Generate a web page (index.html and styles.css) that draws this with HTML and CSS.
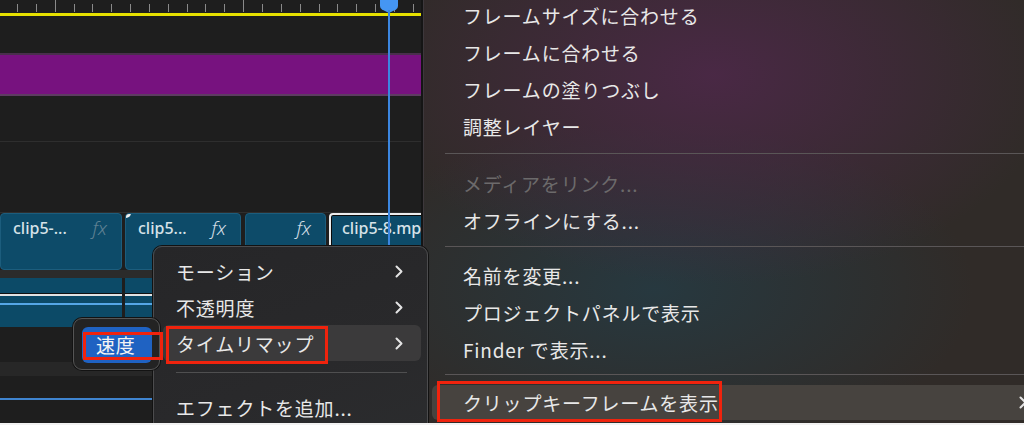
FILE: index.html
```html
<!DOCTYPE html>
<html lang="ja">
<head>
<meta charset="utf-8">
<title>Timeline context menu</title>
<link rel="stylesheet" href="styles.css">
</head>
<body>
<div class="app">
  <section class="timeline">
    <div class="ruler">
      <i class="tick"></i><i class="tick"></i><i class="tick major"></i><i class="tick"></i><i class="tick"></i><i class="tick"></i><i class="tick"></i><i class="tick"></i><i class="tick"></i><i class="tick"></i><i class="tick"></i><i class="tick"></i><i class="tick major"></i><i class="tick"></i><i class="tick"></i><i class="tick"></i><i class="tick"></i><i class="tick"></i><i class="tick"></i><i class="tick"></i><i class="tick"></i><i class="tick"></i>
    </div>
    <div class="work-area"></div>
    <div class="space s37"></div>
    <div class="purple-track"></div>
    <div class="space s45"></div>
    <div class="rule"></div>
    <div class="space s70"></div>
    <div class="rule"></div>
    <div class="clips">
      <div class="clip c1"><span class="name">clip5-...</span><span class="fx dim">fx</span></div>
      <div class="clip c2"><span class="name">clip5...</span><span class="fx">fx</span></div>
      <div class="clip c3"><span class="name"></span><span class="fx">fx</span></div>
      <div class="clip c4 selected"><span class="name">clip5-8.mp4</span></div>
    </div>
    <div class="band"></div>
    <div class="audio">
      <div class="aseg a1"></div>
      <div class="aseg a2"></div>
    </div>
    <div class="space s35"></div>
    <div class="band2"></div>
    <div class="space s22"></div>
    <div class="blue-rule"></div>
    <div class="playhead">
      <svg class="ph-head" width="18" height="13" viewBox="0 0 18 13"><path d="M0 0H18V6Q18 8 16 9.5L9 13L2 9.5Q0 8 0 6Z" fill="#4596f3"/></svg>
      <div class="ph-line"></div>
    </div>
  </section>
  <div class="divider"></div>
  <nav class="ctx-main">
    <ul class="ctx-list">
      <li class="mi">フレームサイズに合わせる</li>
      <li class="mi">フレームに合わせる</li>
      <li class="mi">フレームの塗りつぶし</li>
      <li class="mi">調整レイヤー</li>
      <li class="sep sep1"></li>
      <li class="mi disabled">メディアをリンク...</li>
      <li class="mi">オフラインにする...</li>
      <li class="sep sep2"></li>
      <li class="mi">名前を変更...</li>
      <li class="mi">プロジェクトパネルで表示</li>
      <li class="mi">Finder で表示...</li>
      <li class="sep sep3"></li>
      <li class="mi hot"><span>クリップキーフレームを表示</span><svg class="chev" width="8" height="13" viewBox="0 0 8 13"><polyline points="1.5,1.5 6.5,6.5 1.5,11.5"/></svg></li>
    </ul>
  </nav>

  <div class="submenu">
    <ul class="sub-list">
      <li class="si"><span>モーション</span><svg class="chev" width="8" height="13" viewBox="0 0 8 13"><polyline points="1.5,1.5 6.5,6.5 1.5,11.5"/></svg></li>
      <li class="si"><span>不透明度</span><svg class="chev" width="8" height="13" viewBox="0 0 8 13"><polyline points="1.5,1.5 6.5,6.5 1.5,11.5"/></svg></li>
      <li class="si hot"><span>タイムリマップ</span><svg class="chev" width="8" height="13" viewBox="0 0 8 13"><polyline points="1.5,1.5 6.5,6.5 1.5,11.5"/></svg></li>
      <li class="ssep"></li>
      <li class="si"><span>エフェクトを追加...</span></li>
    </ul>
  </div>

  <div class="popover">
    <div class="pop-item">速度</div>
  </div>

  <div class="mark m1"></div>
  <div class="mark m2"></div>
  <div class="mark m3"></div>
</div>
</body>
</html>
```

FILE: styles.css
```css
* { box-sizing: border-box; margin: 0; padding: 0; }
html, body { background: #f2f2f2; }
body {
  width: 1024px;
  height: 425px;
  overflow: hidden;
  font-family: "Noto Sans CJK JP", "Noto Sans", sans-serif;
}
ul { list-style: none; }

.app {
  position: relative;
  width: 1024px;
  height: 423px;
  overflow: hidden;
  display: grid;
  grid-template-columns: 421px 2px 1fr;
  background: #1d1d1d;
}

/* ---------- timeline ---------- */
.timeline {
  position: relative;
  display: flex;
  flex-direction: column;
  background: #1e1e1e;
  overflow: hidden;
}
.ruler {
  height: 13px;
  flex: none;
  display: flex;
  justify-content: space-between;
  align-items: flex-end;
  padding: 0 7px 1px 17px;
}
.tick { display: block; width: 1px; height: 8px; background: #8a8a8a; }
.tick.major { height: 12px; }
.work-area { height: 3px; flex: none; background: #e6e000; }
.space { flex: none; }
.s37 { height: 37px; }
.s45 { height: 45px; }
.s70 { height: 70px; }
.s35 { height: 35px; }
.s22 { height: 22px; }
.purple-track {
  height: 43px;
  flex: none;
  background: #77127f;
  border-top: 2px solid #4a2f4d;
  border-bottom: 2px solid #5e3b62;
}
.rule { height: 1px; flex: none; background: #2e2e2e; }

.clips { height: 57px; flex: none; display: flex; }
.clip {
  position: relative;
  flex: none;
  display: flex;
  justify-content: space-between;
  align-items: flex-start;
  padding: 3px 14px 0 12px;
  background: #0d4b69;
  border: 1px solid #1c5d7d;
  border-radius: 4px;
  font-family: "Noto Sans", "Open Sans", sans-serif;
  font-size: 16px;
  font-weight: 500;
  line-height: 22px;
  color: #d6e2e8;
  white-space: nowrap;
  overflow: hidden;
}
.c1 { width: 122px; }
.c2 { width: 116px; margin-left: 3px; }
.c3 { width: 81px; margin-left: 4px; }
.c4 { width: 110px; margin-left: 3px; }
.clip.selected {
  border: 2px solid #ececec;
  box-shadow: inset 0 0 0 1px #0a0a0a;
  padding-left: 11px;
  padding-top: 2px;
}
.c2::before {
  content: "";
  position: absolute;
  left: -1px;
  top: -1px;
  width: 6px;
  height: 5px;
  background: #f0f0f0;
  border-bottom-right-radius: 5px;
}
.fx {
  font-style: italic;
  font-size: 19px;
  font-weight: 300;
  color: #d2dde4;
}
.fx.dim { color: #5f8193; }

.band { height: 8px; flex: none; background: #2b2b2b; }
.audio { height: 49px; flex: none; display: flex; }
.aseg {
  background:
    linear-gradient(to bottom,
      transparent 15px, #111 15px, #111 16px,
      #e2e2e2 16px, #e2e2e2 18px, transparent 18px,
      transparent 25px, #55a6e6 25px, #55a6e6 27px, transparent 27px),
    #0c4a67;
}
.a1 { width: 122px; flex: none; }
.a2 { flex: 1; margin-left: 3px; }
.band2 { height: 14px; flex: none; background: #272727; }
.blue-rule { height: 2px; flex: none; background: #3f84cf; }

.playhead {
  position: absolute;
  left: 380px;
  top: 0;
  width: 18px;
  height: 100%;
}
.ph-head { position: absolute; left: 0; top: 0; }
.ph-line {
  position: absolute;
  left: 8px;
  top: 10px;
  width: 2px;
  bottom: 0;
  background: #3b86e0;
}

.divider { background: #151515; }

/* ---------- main context menu ---------- */
.ctx-main {
  position: relative;
  overflow: hidden;
  border-left: 1px solid #3d383c;
  background:
    radial-gradient(ellipse 340px 210px at 290px 75px, rgba(78, 40, 74, 0.85), rgba(78, 40, 74, 0) 100%),
    radial-gradient(ellipse 320px 170px at 230px 290px, rgba(38, 58, 66, 0.9), rgba(38, 58, 66, 0) 100%),
    #302b28;
}
.ctx-list {
  width: 630px;
  margin-top: -3px;
  display: flex;
  flex-direction: column;
}
.mi {
  height: 37px;
  flex: none;
  display: flex;
  align-items: center;
  justify-content: space-between;
  margin-left: 8px;
  margin-right: 9px;
  padding: 0 18px 0 31px;
  font-size: 19px;
  letter-spacing: 0.8px;
  color: #e8e8e8;
  white-space: nowrap;
}
.mi.disabled { color: #6c6a6b; }
.mi.hot {
  height: 35px;
  background: #47433f;
  border-radius: 6px;
}
.sep { height: 1px; flex: none; margin-left: 21px; background: #5a5657; }
.sep1 { margin-top: 8px; margin-bottom: 11px; }
.sep2 { margin-top: 7px; margin-bottom: 10px; }
.sep3 { margin-top: 6px; margin-bottom: 10px; }

.chev { flex: none; }
.chev polyline {
  fill: none;
  stroke: #e4e4e4;
  stroke-width: 2;
  stroke-linecap: round;
  stroke-linejoin: round;
}

/* ---------- submenu ---------- */
.submenu {
  position: absolute;
  left: 153px;
  top: 246px;
  width: 275px;
  height: 200px;
  z-index: 2;
  border: 1px solid #4c4c4e;
  border-radius: 9px;
  background: linear-gradient(160deg, #262628 0%, #29292b 60%, #2b2c2e 100%);
  box-shadow: 0 0 0 1px #121212;
  padding-top: 6px;
}
.sub-list { display: flex; flex-direction: column; }
.si {
  height: 36px;
  flex: none;
  display: flex;
  align-items: center;
  justify-content: space-between;
  margin: 0 6px 0 9px;
  padding: 0 18px 0 13px;
  font-size: 19px;
  letter-spacing: 0.8px;
  color: #e8e8e8;
  white-space: nowrap;
}
.si.hot { background: #3b3a3b; border-radius: 6px; }
.ssep {
  height: 1px;
  flex: none;
  margin: 11px 20px 16px 22px;
  background: #4f4f50;
}

/* ---------- speed popover ---------- */
.popover {
  position: absolute;
  left: 73px;
  top: 318px;
  width: 87px;
  height: 52px;
  z-index: 3;
  border: 1px solid #555;
  border-radius: 9px;
  background: #232323;
  box-shadow: 0 0 0 1px #131313;
  padding: 8px 7px 0 8px;
}
.pop-item {
  height: 36px;
  display: flex;
  align-items: center;
  padding-left: 14px;
  padding-bottom: 1px;
  background: #1f62c2;
  border-radius: 6px;
  font-size: 19px;
  letter-spacing: 0.8px;
  color: #f4f4f4;
}

/* ---------- red annotation boxes ---------- */
.mark {
  position: absolute;
  z-index: 5;
  border: 3px solid #f0230d;
}
.m1 { left: 83px; top: 332px; width: 80px; height: 28px; }
.m2 { left: 166px; top: 326px; width: 162px; height: 38px; }
.m3 { left: 437px; top: 381px; width: 285px; height: 41px; }
```
